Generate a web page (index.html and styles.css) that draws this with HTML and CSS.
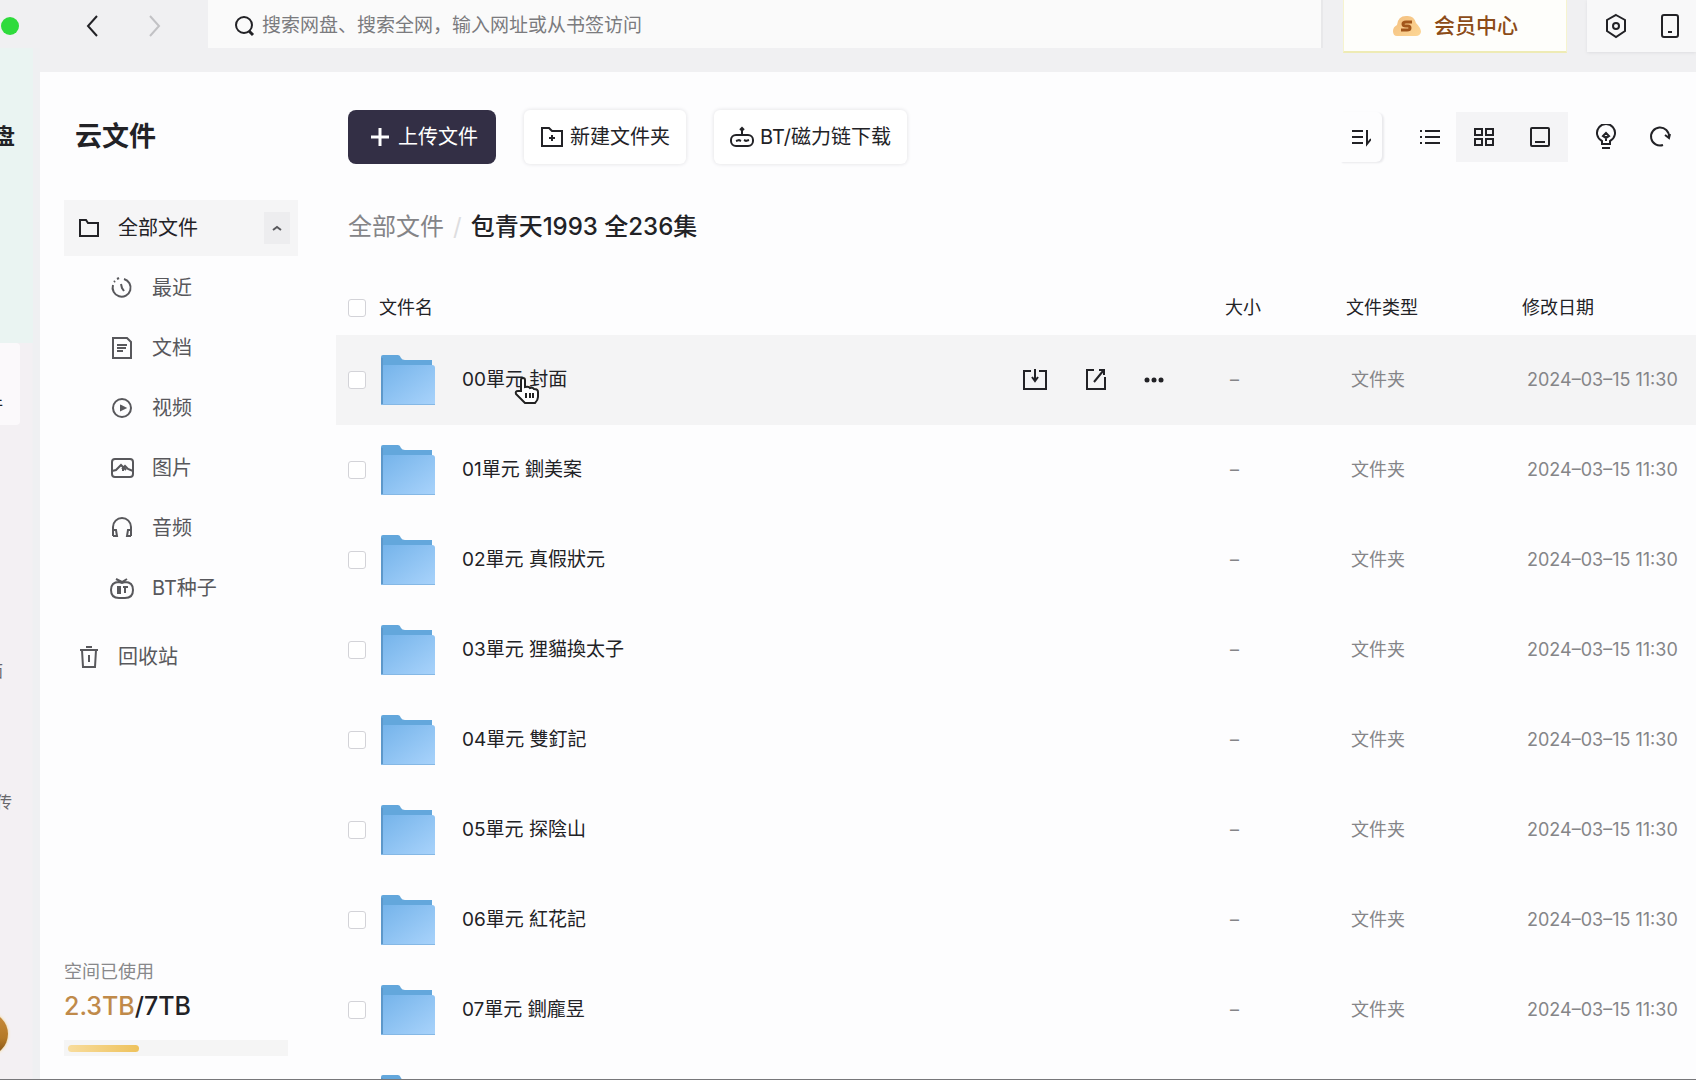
FILE: index.html
```html
<!DOCTYPE html>
<html lang="zh-CN">
<head>
<meta charset="utf-8">
<title>云文件</title>
<link rel="stylesheet" href="styles.css">
</head>
<body>
<svg class="defs" aria-hidden="true">
  <defs>
    <linearGradient id="folderFront" x1="0" y1="0" x2="1" y2="1">
      <stop offset="0" stop-color="#74b3ea"/><stop offset="1" stop-color="#a9d3fb"/>
    </linearGradient>
    <linearGradient id="gold" x1="0" y1="0" x2="1" y2="1">
      <stop offset="0" stop-color="#f3bf80"/><stop offset="1" stop-color="#fdd795"/>
    </linearGradient>
    <symbol id="folder" viewBox="0 0 54 50">
      <g stroke="none">
        <path d="M0 2Q0 0 2 0H17Q19 0 20 3Q21 5 24 5H51V16H0Z" fill="#63a7dc"/>
        <path d="M0 12Q0 10 3 10H51Q54 10 54 13V50H0Z" fill="url(#folderFront)"/>
        <path d="M0 3H2V50H0Z" fill="#5d98ca"/>
        <path d="M0 49H54V50H0Z" fill="#85b8e5"/>
      </g>
    </symbol>
  </defs>
</svg>

<header class="topbar">
  <div class="window-nav">
    <span class="dot"></span>
    <button class="icon-btn back" aria-label="后退"><svg width="14" height="24" viewBox="0 0 14 24"><path d="M12 2 3 12l9 10" stroke-width="2"/></svg></button>
    <button class="icon-btn forward" aria-label="前进" disabled><svg width="14" height="24" viewBox="0 0 14 24"><path d="m2 2 9 10-9 10" stroke-width="2"/></svg></button>
  </div>
  <label class="search">
    <svg width="22" height="22" viewBox="0 0 22 22"><circle cx="10" cy="10" r="8" stroke-width="2"/><path d="m15 16 4 4" stroke-width="3"/></svg>
    <input type="text" aria-label="搜索" placeholder="搜索网盘、搜索全网，输入网址或从书签访问">
  </label>
  <button class="vip">
    <svg width="30" height="24" viewBox="0 0 30 24"><path d="M5 22Q1 22 1 17Q1 13 5 11Q6 2 14 2Q22 1 24 9Q29 14 29 18Q28 22 24 22Z" fill="url(#gold)" stroke="none"/><path d="M20 8h-6q-3 0-3 2t3 2h2q2 0 2 2t-3 2H9" stroke="#a2561b" stroke-width="3"/></svg>
    会员中心
  </button>
  <div class="top-tools">
    <button class="icon-btn" aria-label="设置"><svg width="24" height="26" viewBox="0 0 24 26"><path d="m12 2 9 5v11l-9 6-9-6V7Z" stroke-width="2"/><circle cx="12" cy="13" r="3" stroke-width="2"/></svg></button>
    <button class="icon-btn" aria-label="手机"><svg width="20" height="26" viewBox="0 0 20 26"><rect x="2" y="2" width="16" height="22" rx="2" stroke-width="2"/><path d="M8 19h4" stroke-width="2"/></svg></button>
  </div>
</header>

<div class="body">
  <nav class="rail" aria-label="应用">
    <div class="rail-top"><b>网盘</b></div>
    <a class="rail-tile" href="#files">文件</a>
    <a class="rail-link rail-desk" href="#desk">桌面</a>
    <a class="rail-link rail-send" href="#transfer">上传</a>
    <span class="avatar"></span>
  </nav>

  <div class="panel">
    <aside class="sidebar">
      <h1>云文件</h1>
      <nav class="menu" aria-label="文件分类">
        <a class="item current" href="#all">
          <svg width="22" height="22" viewBox="0 0 22 22"><path d="M2 3h6l2 3h10v13H2Z"/></svg>
          <span>全部文件</span>
          <span class="fold"><svg width="10" height="6" viewBox="0 0 10 6"><path d="m1 5 4-3 4 3"/></svg></span>
        </a>
        <a class="item sub" href="#recent"><svg width="24" height="24" viewBox="0 0 24 24"><path d="M14 3a9 9 0 1 1-11 6"/><path d="M4 6l1-1M7 3l2-1M11 8l1 4 2 3"/></svg><span>最近</span></a>
        <a class="item sub" href="#docs"><svg width="24" height="24" viewBox="0 0 24 24"><path d="M3 2h14l4 4v16H3ZM7 9h10M7 12h9M7 15h6"/></svg><span>文档</span></a>
        <a class="item sub" href="#video"><svg width="24" height="24" viewBox="0 0 24 24"><circle cx="12" cy="12" r="9"/><path d="m11 10 4 2-4 2Z" fill="currentColor"/></svg><span>视频</span></a>
        <a class="item sub" href="#pics"><svg width="24" height="24" viewBox="0 0 24 24"><rect x="2" y="3" width="21" height="18" rx="3"/><path d="M2 15l4-1 5-5 5 5M12 13l3-3 3 3 5 2M13 11v4"/></svg><span>图片</span></a>
        <a class="item sub" href="#audio"><svg width="24" height="24" viewBox="0 0 24 24"><path d="M3 20v-9a9 9 0 0 1 18 0v9"/><path d="M3 14h3l1 6H3M21 14h-3l-1 6h4"/></svg><span>音频</span></a>
        <a class="item sub" href="#bt"><svg width="24" height="24" viewBox="0 0 24 24"><path d="M9 6Q1 6 1 14t8 8h6q8 0 8-8t-8-8l-3 1ZM6 3l6 3 5-3"/><path d="M8 11v6h2v-6ZM13 11h5M15 11v6"/></svg><span>BT种子</span></a>
        <a class="item bin" href="#bin"><svg width="22" height="24" viewBox="0 0 22 24"><path d="M2 5h18M8 2h6M4 5l1 17h12l1-17M11 10v7"/></svg><span>回收站</span></a>
      </nav>
      <section class="storage">
        <span class="storage-label">空间已使用</span>
        <span class="storage-value"><span class="used">2.3TB</span>/7TB</span>
        <div class="meter"><div class="meter-fill" style="width:33%"></div></div>
      </section>
    </aside>

    <main class="main">
      <div class="toolbar">
        <button class="btn primary"><svg width="20" height="20" viewBox="0 0 20 20"><path d="M10 1v18M1 10h18" stroke-width="3"/></svg>上传文件</button>
        <button class="btn"><svg width="24" height="22" viewBox="0 0 24 22"><path d="M2 2h7l3 3h10v15H2Z" stroke-width="2"/><path d="M12 9v6M9 12h6" stroke-width="2"/></svg>新建文件夹</button>
        <button class="btn"><svg width="24" height="22" viewBox="0 0 24 22"><rect x="1" y="9" width="22" height="11" rx="5" stroke-width="2"/><path d="M12 9V2M10 4l2-2 2 2" stroke-width="2"/><path d="m6 15 3-1 2 1M14 14l2 1 3-1"/></svg>BT/磁力链下载</button>
        <div class="tools">
          <button class="tool sort" aria-label="排序"><svg width="20" height="20" viewBox="0 0 20 20"><path d="M1 4h11M1 10h11M1 16h11M16 3v14l4-5" stroke-width="2"/></svg></button>
          <button class="tool list" aria-label="列表"><svg width="20" height="20" viewBox="0 0 20 20"><path d="M5 4h15M5 10h15M5 16h15M0 4h2M0 10h2M0 16h2" stroke-width="2"/></svg></button>
          <div class="views">
            <button class="tool" aria-label="网格"><svg width="20" height="20" viewBox="0 0 20 20"><path d="M1 2h7v6H1ZM12 2h7v6h-7ZM1 12h7v6H1ZM12 12h7v6h-7Z" stroke-width="2"/></svg></button>
            <button class="tool" aria-label="大图"><svg width="22" height="22" viewBox="0 0 22 22"><rect x="2" y="2" width="18" height="18" rx="1" stroke-width="2"/><path d="M6 16h10" stroke-width="2"/></svg></button>
          </div>
          <button class="tool tip" aria-label="提示"><svg width="22" height="26" viewBox="0 0 22 26"><path d="M7 20v-3a9 9 0 1 1 8 0v3ZM7 24h8" stroke-width="2"/><path d="M11 17v-5M8 12l3-3 3 3-3 2Z" stroke-width="2"/></svg></button>
          <button class="tool reload" aria-label="刷新"><svg width="22" height="22" viewBox="0 0 22 22"><path d="M14 19a9 9 0 1 1 6-8M16 9l4 3 1-4" stroke-width="2"/></svg></button>
        </div>
      </div>

      <div class="crumbs"><a href="#all">全部文件</a><i>/</i><b>包青天1993 全236集</b></div>

      <table class="files">
        <colgroup><col class="c-check"><col><col class="c-act"><col class="c-size"><col class="c-type"><col class="c-date"></colgroup>
        <thead>
          <tr><th><input type="checkbox" aria-label="全选"></th><th>文件名</th><th></th><th>大小</th><th>文件类型</th><th>修改日期</th></tr>
        </thead>
        <tbody>
          <tr class="hover">
            <td><input type="checkbox" aria-label="选择 00單元"></td>
            <td><div class="name"><svg width="54" height="50"><use href="#folder"/></svg><span class="pointed">00單元 封面<svg class="cursor" width="26" height="28" viewBox="0 0 26 28"><path d="M7 15V4q0-2 2-2t2 2v7q4-1 5 1 3-1 4 1 4 0 4 3v5q0 3-3 6H11l-9-9q-1-3 2-3Z" fill="#fff" stroke="#222" stroke-width="2"/><path d="M12 17v5M16 17v5M19 17v5" stroke="#222"/></svg></span></div></td>
            <td><div class="actions">
              <button class="icon-btn" aria-label="下载"><svg width="26" height="24" viewBox="0 0 26 24"><path d="M9 3H2v18h22V3h-7" stroke-width="2"/><path d="M13 1v12M10 9l3 4 3-4" stroke-width="2"/></svg></button>
              <button class="icon-btn" aria-label="分享"><svg width="24" height="24" viewBox="0 0 24 24"><path d="M10 2H3v19h18V9" stroke-width="2"/><path d="m10 14 9-11M15 2h5v5" stroke-width="2"/></svg></button>
              <button class="icon-btn" aria-label="更多"><svg width="20" height="24" viewBox="0 0 20 24"><g fill="currentColor" stroke="none"><circle cx="3" cy="12" r="2.5"/><circle cx="10" cy="12" r="2.5"/><circle cx="17" cy="12" r="2.5"/></g></svg></button>
            </div></td>
            <td>–</td><td>文件夹</td><td>2024–03–15 11:30</td>
          </tr>
          <tr><td><input type="checkbox" aria-label="选择 01單元"></td><td><div class="name"><svg width="54" height="50"><use href="#folder"/></svg><span>01單元 鍘美案</span></div></td><td></td><td>–</td><td>文件夹</td><td>2024–03–15 11:30</td></tr>
          <tr><td><input type="checkbox" aria-label="选择 02單元"></td><td><div class="name"><svg width="54" height="50"><use href="#folder"/></svg><span>02單元 真假狀元</span></div></td><td></td><td>–</td><td>文件夹</td><td>2024–03–15 11:30</td></tr>
          <tr><td><input type="checkbox" aria-label="选择 03單元"></td><td><div class="name"><svg width="54" height="50"><use href="#folder"/></svg><span>03單元 狸貓換太子</span></div></td><td></td><td>–</td><td>文件夹</td><td>2024–03–15 11:30</td></tr>
          <tr><td><input type="checkbox" aria-label="选择 04單元"></td><td><div class="name"><svg width="54" height="50"><use href="#folder"/></svg><span>04單元 雙釘記</span></div></td><td></td><td>–</td><td>文件夹</td><td>2024–03–15 11:30</td></tr>
          <tr><td><input type="checkbox" aria-label="选择 05單元"></td><td><div class="name"><svg width="54" height="50"><use href="#folder"/></svg><span>05單元 探陰山</span></div></td><td></td><td>–</td><td>文件夹</td><td>2024–03–15 11:30</td></tr>
          <tr><td><input type="checkbox" aria-label="选择 06單元"></td><td><div class="name"><svg width="54" height="50"><use href="#folder"/></svg><span>06單元 紅花記</span></div></td><td></td><td>–</td><td>文件夹</td><td>2024–03–15 11:30</td></tr>
          <tr><td><input type="checkbox" aria-label="选择 07單元"></td><td><div class="name"><svg width="54" height="50"><use href="#folder"/></svg><span>07單元 鍘龐昱</span></div></td><td></td><td>–</td><td>文件夹</td><td>2024–03–15 11:30</td></tr>
          <tr><td></td><td><div class="name"><svg width="54" height="50"><use href="#folder"/></svg></div></td><td></td><td></td><td></td><td></td></tr>
        </tbody>
      </table>
    </main>
  </div>
</div>
</body>
</html>
```

FILE: styles.css
```css
* { box-sizing: border-box; }

body {
  margin: 0;
  height: 100vh;
  display: flex;
  flex-direction: column;
  overflow: hidden;
  border-bottom: 1px solid #77777a;
  background: #f0f0f2;
  color: #222226;
  font: 20px/28px Inter, "Noto Sans CJK SC", sans-serif;
}

button, input { font: inherit; color: inherit; }
button { border: 0; padding: 0; background: none; white-space: nowrap; }
a { color: inherit; text-decoration: none; }
svg { display: block; flex: none; fill: none; stroke: currentColor; stroke-width: 2; }
.defs { position: absolute; width: 0; height: 0; }

/* top bar */
.topbar {
  display: flex;
  align-items: flex-start;
  height: 72px;
  flex: none;
}
.window-nav {
  display: flex;
  align-items: center;
  width: 208px;
  height: 52px;
  flex: none;
}
.dot { width: 18px; height: 18px; margin-left: 1px; border-radius: 50%; background: #2edb3c; }
.back { margin-left: 66px; }
.forward { margin-left: 49px; color: #c2c2c5; }
.search {
  display: flex;
  align-items: center;
  gap: 6px;
  flex: 1;
  height: 48px;
  padding: 4px 16px 0 26px;
  background: #fafafa;
  border-right: 2px solid #e8e8ea;
  font-size: 19px;
}
.search input { flex: 1; min-width: 0; border: 0; padding: 0; background: none; outline: 0; }
.search input::placeholder { color: #7b7b7e; opacity: 1; }
.vip {
  display: flex;
  align-items: center;
  justify-content: center;
  gap: 12px;
  width: 224px;
  height: 53px;
  margin: 0 20px;
  border: 1px solid #f6f4cf;
  border-top: 0;
  border-bottom: 2px solid #eeebb5;
  background: #fefefb;
  color: #8c4c18;
  font-size: 21px;
  font-weight: 500;
}
.top-tools {
  display: flex;
  align-items: center;
  gap: 32px;
  height: 52px;
  padding: 0 16px 0 17px;
  background: #f8f8f9;
  box-shadow: 0 1px 3px #dedee1;
}

/* left rail */
.body { display: flex; flex: 1; min-height: 0; }
.rail {
  display: flex;
  flex-direction: column;
  align-items: flex-start;
  width: 40px;
  flex: none;
  margin-top: -24px;
  overflow: hidden;
  background: linear-gradient(90deg, #f3f0f3 32px, #eff0f2 33px);
  font-size: 16px;
}
.rail-top, .rail-tile, .rail-link { display: flex; justify-content: flex-end; align-items: center; flex: none; white-space: nowrap; }
.rail-top { width: 33px; height: 295px; padding: 74px 18px 0 0; align-items: flex-start; background: #eaf4f2; font-size: 22px; }
.rail-tile { width: 20px; height: 82px; padding: 40px 17px 0 0; background: #fbf9fb; border-radius: 0 4px 4px 0; }
.rail-link { height: 28px; color: #66666a; }
.rail-desk { width: 3px; margin-top: 232px; }
.rail-send { width: 12px; margin-top: 103px; }
.avatar { width: 44px; height: 44px; margin: 196px 0 0 -36px; flex: none; border-radius: 50%; background: linear-gradient(#c98c3c, #b47a26 60%, #7e4d12); box-shadow: 0 0 3px #f3d27a; }

/* panel */
.panel { display: flex; flex: 1; min-width: 0; background: #fdfdfe; }
.sidebar {
  display: flex;
  flex-direction: column;
  width: 284px;
  flex: none;
  padding: 49px 26px 23px 24px;
}
h1 { margin: 0 0 47px 11px; font-size: 27px; line-height: 32px; }
.menu { display: flex; flex-direction: column; }
.item { display: flex; align-items: center; gap: 18px; height: 60px; padding-left: 14px; color: #58585c; }
.item.current { height: 56px; margin-bottom: 2px; background: #f5f5f6; color: #222226; }
.fold { display: grid; place-items: center; width: 26px; height: 32px; margin: 0 8px 0 auto; background: #ededef; color: #58585c; }
.item.sub { padding-left: 46px; }
.item.bin { margin-top: 9px; }
.item:not(.current) svg { stroke-width: 2; }
.storage { display: flex; flex-direction: column; margin-top: auto; }
.storage-label { color: #88888b; font-size: 18px; }
.storage-value { margin: 4px 0 18px; font-size: 25px; line-height: 32px; font-weight: 500; }
.used { color: #c08a4a; }
.meter { width: 224px; height: 16px; padding: 5px 4px; background: #f5f5f5; }
.meter-fill { height: 7px; border-radius: 4px; background: linear-gradient(90deg, #f8dc9c, #eec25c); }

/* main */
.main { flex: 1; min-width: 0; padding: 38px 0 0 12px; overflow: hidden; }
.toolbar { display: flex; align-items: center; gap: 28px; padding: 0 20px 0 12px; }
.btn {
  display: flex;
  align-items: center;
  gap: 6px;
  height: 54px;
  padding: 0 16px;
  border-radius: 6px;
  background: #fff;
  box-shadow: 0 0 4px #dfdfe3;
}
.btn.primary { padding: 0 18px 0 22px; border-radius: 8px; gap: 8px; background: #332f45; color: #fff; box-shadow: none; }
.tools { display: flex; align-items: center; margin-left: auto; }
.tool { display: grid; place-items: center; width: 56px; height: 50px; }
.sort { width: 42px; margin-right: 20px; border-radius: 0 6px 6px 0; box-shadow: 2px 1px 2px #e9e9ec; }
.list { margin-right: -2px; }
.views { display: flex; background: #f4f4f6; }
.tip { width: 76px; }
.reload { width: 32px; }

.crumbs { display: flex; gap: 9px; margin: 47px 0 0 12px; font-size: 24px; line-height: 32px; }
.crumbs a { color: #848487; }
.crumbs i { color: #dddde0; font-style: normal; }
.crumbs b { font-weight: 500; }

.files { width: 100%; margin-top: 38px; border-collapse: collapse; table-layout: fixed; font-size: 18px; }
.c-check { width: 43px; }
.c-act { width: 205px; }
.c-size { width: 121px; }
.c-type { width: 176px; }
.c-date { width: 174px; }
th { height: 54px; padding: 0; text-align: left; font-weight: 400; white-space: nowrap; }
td { height: 90px; padding: 0 0 0 5px; color: #858588; white-space: nowrap; }
th:first-child, td:first-child { padding-left: 12px; }
td:nth-child(2), td:nth-child(3) { padding-left: 2px; color: #222226; }
.hover td { background: #f4f4f5; }
input[type="checkbox"] { appearance: none; display: block; width: 18px; height: 18px; margin: 0; border: 1px solid #d3d3d8; border-radius: 3px; background: #fff; }
.name { display: flex; align-items: center; gap: 27px; font-size: 19px; }
.pointed { position: relative; }
.cursor { position: absolute; left: 52px; top: 10px; }
.icon-btn { display: grid; place-items: center; }
.actions { display: flex; align-items: center; gap: 36px; }
```
